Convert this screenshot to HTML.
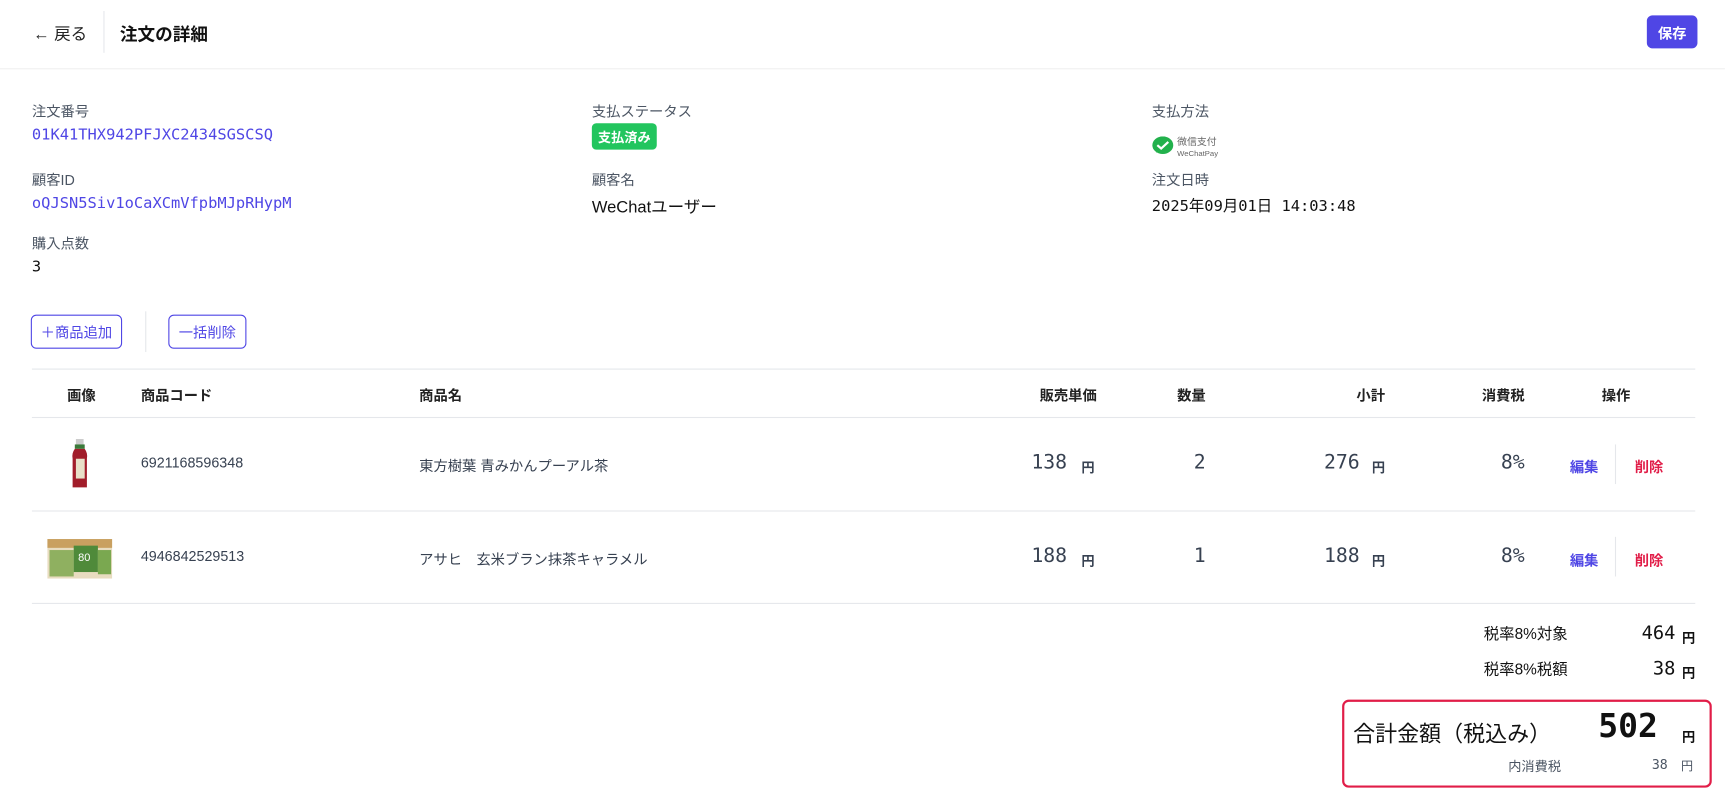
<!DOCTYPE html>
<html><head><meta charset="utf-8"><style>
*{box-sizing:border-box;margin:0;padding:0}
body{width:1725px;height:806px;background:#fff;font-family:"Liberation Sans","Noto Sans CJK JP",sans-serif;color:#111;position:relative;overflow:hidden}
#w{position:absolute;left:0;top:0;width:1568px;height:733px;transform:scale(1.1001);transform-origin:0 0}
.a{position:absolute;white-space:nowrap}
.mono{font-family:"DejaVu Sans Mono","Liberation Mono","Noto Sans CJK JP",monospace}
.lbl{font-size:13px;color:#4b5563}
.val{font-size:15px}
.blue{color:#4f46e5}
.line{position:absolute;height:1px;background:#e5e7eb}
.th{font-size:13px;font-weight:bold;color:#222}
.td{font-size:13px;color:#374151}
.num{font-size:18px;color:#374151}
.yen{font-size:12px;font-weight:bold;color:#374151}
.btn{position:absolute;border:1px solid #4f46e5;border-radius:5px;color:#4f46e5;font-size:13px;display:flex;align-items:center;justify-content:center}
</style></head><body><div id="w">
<div class="a" style="left:30px;top:20px;font-size:15px;color:#222">← 戻る</div>
<div class="a" style="left:94px;top:10px;width:1px;height:38px;background:#e5e7eb"></div>
<div class="a" style="left:109px;top:18px;font-size:16px;font-weight:bold">注文の詳細</div>
<div class="a" style="left:1497px;top:14px;width:46px;height:30px;background:#4f46e5;border-radius:5px;color:#fff;font-size:13px;font-weight:bold;display:flex;align-items:center;justify-content:center">保存</div>
<div class="line" style="left:0;top:62px;width:1568px;background:#f0f0f0"></div>

<div class="a lbl" style="left:29px;top:91px">注文番号</div>
<div class="a val mono blue" style="left:29px;top:115px;font-size:14px">01K41THX942PFJXC2434SGSCSQ</div>
<div class="a lbl" style="left:29px;top:153px">顧客ID</div>
<div class="a val mono blue" style="left:29px;top:177px;font-size:14px">oQJSN5Siv1oCaXCmVfpbMJpRHypM</div>
<div class="a lbl" style="left:29px;top:211px">購入点数</div>
<div class="a val mono" style="left:29px;top:235px;font-size:14px">3</div>

<div class="a lbl" style="left:538px;top:91px">支払ステータス</div>
<div class="a" style="left:538px;top:112px;width:59px;height:24px;background:#22c55e;border-radius:4px;color:#fff;font-size:12px;font-weight:bold;display:flex;align-items:center;justify-content:center">支払済み</div>
<div class="a lbl" style="left:538px;top:153px">顧客名</div>
<div class="a val" style="left:538px;top:177px">WeChatユーザー</div>

<div class="a lbl" style="left:1047px;top:91px">支払方法</div>
<svg class="a" style="left:1047px;top:124px" width="20" height="18" viewBox="0 0 20 18"><ellipse cx="10" cy="8" rx="9.5" ry="8" fill="#22b14c"/><path d="M4 15 L6 11 L9 13z" fill="#22b14c"/><path d="M5 8 L8.5 11 L15 5" stroke="#fff" stroke-width="2" fill="none"/></svg>
<div class="a" style="left:1070px;top:124px;font-size:9px;color:#666;line-height:10px">微信支付<br><span style="font-size:7px">WeChatPay</span></div>
<div class="a lbl" style="left:1047px;top:153px">注文日時</div>
<div class="a val mono" style="left:1047px;top:177px;font-size:14px">2025年09月01日 14:03:48</div>

<div class="btn" style="left:28px;top:286px;width:83px;height:31px">＋商品追加</div>
<div class="a" style="left:132px;top:283px;width:1px;height:37px;background:#e5e7eb"></div>
<div class="btn" style="left:153px;top:286px;width:71px;height:31px">一括削除</div>

<div class="line" style="left:29px;top:335px;width:1512px"></div>
<div class="a th" style="left:61px;top:349px">画像</div>
<div class="a th" style="left:128px;top:349px">商品コード</div>
<div class="a th" style="left:381px;top:349px">商品名</div>
<div class="a th" style="right:571px;top:349px">販売単価</div>
<div class="a th" style="right:472px;top:349px">数量</div>
<div class="a th" style="right:309px;top:349px">小計</div>
<div class="a th" style="right:182px;top:349px">消費税</div>
<div class="a th" style="left:1456px;top:349px">操作</div>
<div class="line" style="left:29px;top:379px;width:1512px"></div>

<svg class="a" style="left:64px;top:399px" width="17" height="46" viewBox="0 0 17 46"><rect x="5" y="0" width="7" height="6" fill="#ccc"/><rect x="4" y="5" width="9" height="4" fill="#3a7a3a"/><path d="M4 9 Q1 13 2 18 L2 44 L15 44 L15 18 Q16 13 13 9z" fill="#a11d2a"/><rect x="5" y="18" width="8" height="18" fill="#e8e0c8"/></svg>
<div class="a td" style="left:128px;top:413px">6921168596348</div>
<div class="a td" style="left:381px;top:413px">東方樹葉 青みかんプーアル茶</div>
<div class="a num mono" style="right:598px;top:410px">138</div><div class="a yen" style="left:983px;top:416px">円</div>
<div class="a num mono" style="right:472px;top:410px">2</div>
<div class="a num mono" style="right:332px;top:410px">276</div><div class="a yen" style="left:1247px;top:416px">円</div>
<div class="a num mono" style="right:182px;top:410px">8%</div>
<div class="a" style="left:1427px;top:414px;font-size:13px;font-weight:bold;color:#4f46e5">編集</div>
<div class="a" style="left:1468px;top:404px;width:1px;height:36px;background:#e5e7eb"></div>
<div class="a" style="left:1486px;top:414px;font-size:13px;font-weight:bold;color:#e11d48">削除</div>
<div class="line" style="left:29px;top:464px;width:1512px"></div>

<svg class="a" style="left:43px;top:490px" width="59" height="36" viewBox="0 0 59 36"><rect width="59" height="36" fill="#e8dcc0"/><rect x="0" y="0" width="59" height="8" fill="#c9a060"/><rect x="2" y="10" width="22" height="24" fill="#8fb060"/><rect x="24" y="6" width="22" height="24" fill="#4f8a3a"/><text x="28" y="20" font-size="10" fill="#fff" font-family="Liberation Sans">80</text><rect x="46" y="10" width="12" height="22" fill="#7aa850"/></svg>
<div class="a td" style="left:128px;top:498px">4946842529513</div>
<div class="a td" style="left:381px;top:498px">アサヒ　玄米ブラン抹茶キャラメル</div>
<div class="a num mono" style="right:598px;top:495px">188</div><div class="a yen" style="left:983px;top:501px">円</div>
<div class="a num mono" style="right:472px;top:495px">1</div>
<div class="a num mono" style="right:332px;top:495px">188</div><div class="a yen" style="left:1247px;top:501px">円</div>
<div class="a num mono" style="right:182px;top:495px">8%</div>
<div class="a" style="left:1427px;top:499px;font-size:13px;font-weight:bold;color:#4f46e5">編集</div>
<div class="a" style="left:1468px;top:488px;width:1px;height:36px;background:#e5e7eb"></div>
<div class="a" style="left:1486px;top:499px;font-size:13px;font-weight:bold;color:#e11d48">削除</div>
<div class="line" style="left:29px;top:548px;width:1512px"></div>

<div class="a" style="right:143px;top:566px;font-size:14px">税率8%対象</div>
<div class="a mono" style="right:45px;top:566px;font-size:17px">464</div><div class="a yen" style="left:1529px;top:571px;color:#111">円</div>
<div class="a" style="right:143px;top:598px;font-size:14px">税率8%税額</div>
<div class="a mono" style="right:45px;top:598px;font-size:17px">38</div><div class="a yen" style="left:1529px;top:603px;color:#111">円</div>

<div class="a" style="left:1220px;top:636px;width:336px;height:80px;border:2px solid #e11d48;border-radius:6px"></div>
<div class="a" style="left:1230px;top:651px;font-size:20px">合計金額（税込み）</div>
<div class="a mono" style="right:61px;top:643px;font-size:30px;font-weight:bold">502</div><div class="a yen" style="left:1529px;top:661px;color:#111">円</div>
<div class="a" style="right:149px;top:688px;font-size:12px;color:#4b5563">内消費税</div>
<div class="a mono" style="right:52px;top:688px;font-size:12px;color:#4b5563">38</div><div class="a" style="left:1528px;top:688px;font-size:11px;color:#4b5563">円</div>
</div></body></html>
